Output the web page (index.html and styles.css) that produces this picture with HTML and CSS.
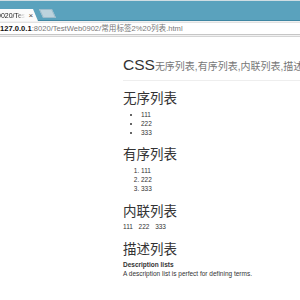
FILE: index.html
```html
<!DOCTYPE html>
<html>
<head>
  <meta charset="utf-8">
  <title>常用标签2 列表</title>
  <link rel="stylesheet" href="styles.css">
</head>
<body>
  <!-- Browser chrome -->
  <div class="chrome">
    <div class="tabstrip">
      <div class="tab">
        <span class="tab-title">0020/Tes</span>
        <span class="tab-close">×</span>
      </div>
      <div class="newtab"></div>
    </div>
    <div class="toolbar">
      <div class="omnibox">
        <span class="host">127.0.0.1</span><span class="path">:8020/TestWeb0902/常用标签2%20列表.html</span>
      </div>
    </div>
  </div>

  <!-- Page -->
  <div class="page">
    <div class="page-header">
      <h1>CSS<small>无序列表,有序列表,内联列表,描述列表</small></h1>
    </div>

    <h2>无序列表</h2>
    <ul>
      <li>111</li>
      <li>222</li>
      <li>333</li>
    </ul>

    <h2>有序列表</h2>
    <ol>
      <li>111</li>
      <li>222</li>
      <li>333</li>
    </ol>

    <h2>内联列表</h2>
    <ul class="list-inline">
      <li>111</li>
      <li>222</li>
      <li>333</li>
    </ul>

    <h2>描述列表</h2>
    <dl>
      <dt>Description lists</dt>
      <dd>A description list is perfect for defining terms.</dd>
    </dl>
  </div>
</body>
</html>
```

FILE: styles.css
```css
body {
  margin: 0;
  background-color: #fff;
  font-family: 'Liberation Sans', Arial, 'Noto Sans CJK SC', sans-serif;
  color: #333;
  overflow: hidden;
}

/* Browser chrome */
.chrome {
  height: 37px;
}

.tabstrip {
  height: 21px;
  background-color: #5aa2bd;
  border-top: 1px solid #cfdde3;
  border-bottom: 1px solid #3f86a2;
  box-sizing: border-box;
  display: flex;
  align-items: flex-end;
}

.tab {
  width: 41px;
  height: 12px;
  margin: 0 0 -1px -3px;
  background-color: #fbfbfb;
  clip-path: polygon(0 0, 36px 0, 41px 100%, 0 100%);
  display: flex;
  align-items: center;
  font-size: 7px;
  color: #222;
}

.tab-title {
  white-space: nowrap;
  -webkit-mask-image: linear-gradient(to right, #000 70%, transparent);
}

.tab-close {
  margin-left: 3px;
  font-size: 8px;
  color: #444;
}

.newtab {
  width: 11px;
  height: 7px;
  margin: 0 0 2px 3px;
  background-color: #bcd3dd;
  border: 1px solid #9dbccb;
  transform: skewX(25deg);
}

.toolbar {
  height: 16px;
  background-color: #f1f1f1;
  border-bottom: 1px solid #d4d4d4;
  box-sizing: border-box;
  padding: 1px 0 1px;
}

.omnibox {
  height: 13px;
  background-color: #fff;
  border-top: 1px solid #e2e2e2;
  border-bottom: 1px solid #c6c6c6;
  box-sizing: border-box;
  font-size: 7.6px;
  line-height: 11px;
  white-space: nowrap;
}

.host {
  font-weight: bold;
  color: #111;
}

.path {
  color: #777;
}

/* Page */
.page {
  padding-left: 123px;
  font-size: 6.5px;
  line-height: 9.3px;
}

.page-header {
  margin-top: 19px;
  padding-bottom: 5px;
  border-bottom: 1px solid #eee;
}

h1 {
  margin: 0;
  font-size: 15.5px;
  font-weight: normal;
  line-height: 17px;
  white-space: nowrap;
}

h1 small {
  font-size: 10px;
  color: #777;
}

h2 {
  margin: 10px 0 3.5px;
  font-size: 13.5px;
  font-weight: normal;
  line-height: 15px;
}

ul,
ol {
  margin: 0;
  padding-left: 18px;
}

.list-inline {
  padding-left: 0;
  list-style: none;
  display: flex;
  gap: 5.7px;
}

dl {
  margin: 0;
}

dt {
  font-weight: bold;
}

dd {
  margin: 0;
}
```
